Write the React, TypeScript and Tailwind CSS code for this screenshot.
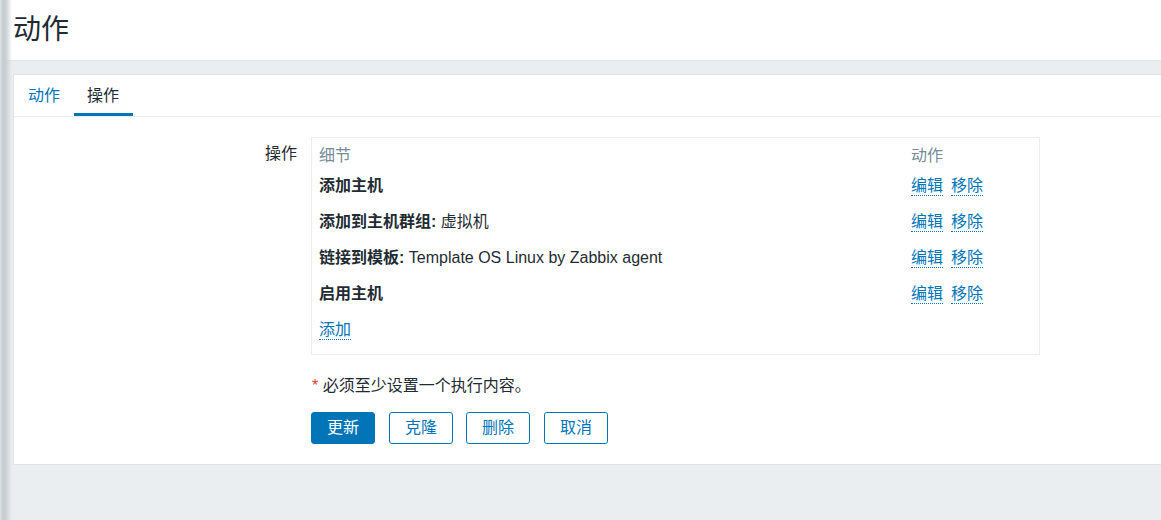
const font = { fontFamily: '"Liberation Sans", "Noto Sans CJK SC", sans-serif' }

type Op = { bold: string; rest?: string }

const ops: Op[] = [
  { bold: '添加主机' },
  { bold: '添加到主机群组:', rest: '虚拟机' },
  { bold: '链接到模板:', rest: 'Template OS Linux by Zabbix agent' },
  { bold: '启用主机' },
]

function DotLink({ children }: { children: React.ReactNode }) {
  return (
    <a className="inline-block leading-[18px] text-[#0275b8] border-b border-dotted border-[#0275b8] cursor-pointer">
      {children}
    </a>
  )
}

function Btn({ label, primary }: { label: string; primary?: boolean }) {
  return (
    <button
      className={
        primary
          ? 'w-[64px] h-[32px] rounded-[3px] bg-[#0275b8] text-white border border-[#0275b8] text-[16px]'
          : 'w-[64px] h-[32px] rounded-[3px] bg-white text-[#0275b8] border border-[#0275b8] text-[16px]'
      }
    >
      {label}
    </button>
  )
}

export default function App() {
  return (
    <div className="relative min-h-[520px] bg-[#ebeef0] text-[#1f2c33] overflow-hidden" style={font}>
      {/* sidebar shadow on the left */}
      <div className="absolute inset-y-0 left-0 w-[12px] bg-[linear-gradient(to_right,#dfe3e6_0px,#c4ccd1_3px,#cbd2d6_6px,rgba(235,238,240,0)_12px)]" />

      <header className="h-[61px] bg-white border-b border-[#dfe4e7] flex items-center pl-[13px]">
        <h1 className="text-[28px] font-normal leading-none">动作</h1>
      </header>

      <div className="pt-[13px] pl-[13px]">
        <div className="bg-white border border-r-0 border-[#dfe4e7] pb-[20px]">
          {/* tabs */}
          <div className="flex gap-px h-[42px] border-b border-[#ebeef0] text-[16px] pl-px">
            <div className="px-[13px] pt-[4px] flex items-center text-[#0275b8] border-b-[3px] border-transparent">动作</div>
            <div className="pl-[13px] pr-[14px] pt-[4px] flex items-center border-b-[3px] border-[#0275b8]">操作</div>
          </div>

          <div className="pt-[20px] text-[16px]">
            <div className="flex">
              <div className="w-[283px] text-right pt-[8px] leading-[18px]">操作</div>
              <div className="ml-[14px] w-[729px] border border-[#ebeef0] px-[7px] py-[6px]">
                <div className="flex h-[24px] items-center text-[#768d99]">
                  <div className="w-[592px]">细节</div>
                  <div>动作</div>
                </div>
                {ops.map((op) => (
                  <div key={op.bold} className="flex h-[36px] items-center">
                    <div className="w-[592px]">
                      <span className="font-bold">{op.bold}</span>
                      {op.rest && <span> {op.rest}</span>}
                    </div>
                    <div className="flex gap-[8px]">
                      <DotLink>编辑</DotLink>
                      <DotLink>移除</DotLink>
                    </div>
                  </div>
                ))}
                <div className="flex h-[36px] items-center">
                  <DotLink>添加</DotLink>
                </div>
              </div>
            </div>

            <div className="ml-[298px] mt-[21px] leading-[20px]">
              <span className="text-[#e33734]">*</span> 必须至少设置一个执行内容。
            </div>

            <div className="ml-[297px] mt-[16px] flex">
              <Btn label="更新" primary />
              <div className="ml-[14px]"><Btn label="克隆" /></div>
              <div className="ml-[13px]"><Btn label="删除" /></div>
              <div className="ml-[14px]"><Btn label="取消" /></div>
            </div>
          </div>
        </div>
      </div>
    </div>
  )
}
